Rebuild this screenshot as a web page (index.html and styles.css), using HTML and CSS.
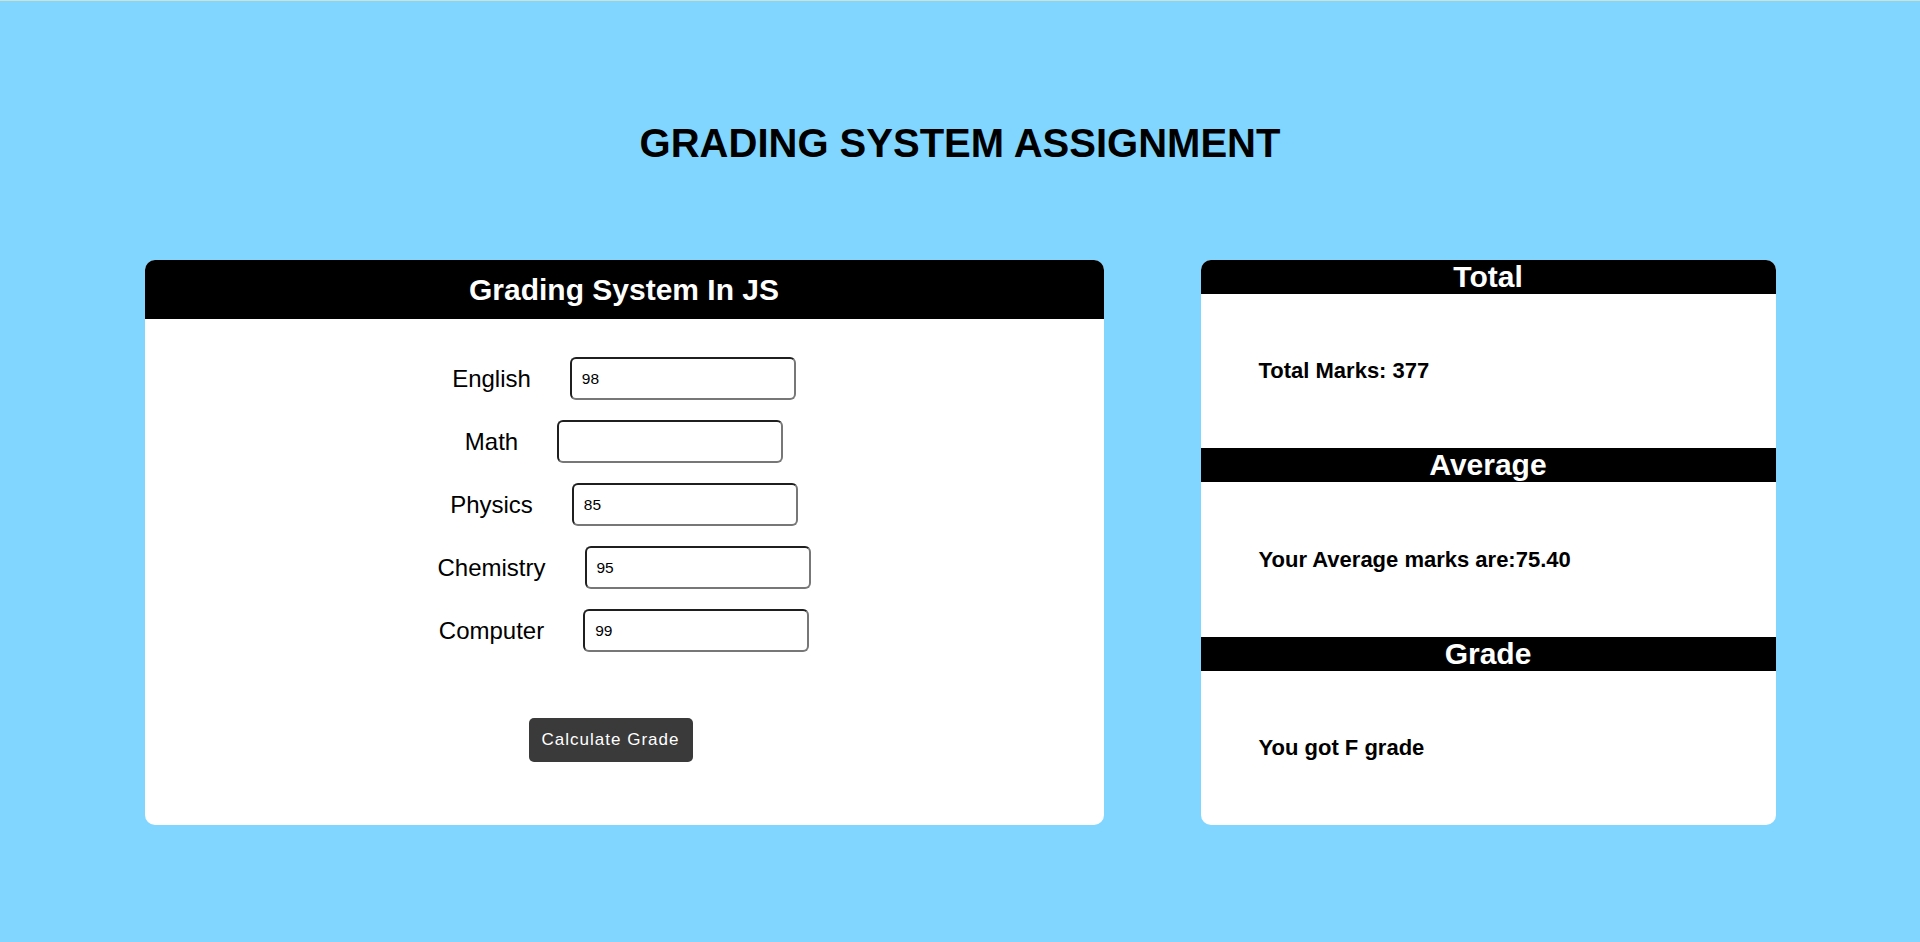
FILE: index.html
```html
<!DOCTYPE html>
<html lang="en">
<head>
<meta charset="utf-8">
<title>Grading System Assignment</title>
<link rel="stylesheet" href="styles.css">
</head>
<body>
<div class="page">
  <h1 class="title">GRADING SYSTEM ASSIGNMENT</h1>
  <div class="cards">
    <section class="card card-form">
      <h2 class="form-head">Grading System In JS</h2>
      <div class="form-body">
        <div class="rows">
          <div class="row"><label class="lbl">English</label><input class="field" type="text" value="98"></div>
          <div class="row"><label class="lbl">Math</label><input class="field" type="text" value=""></div>
          <div class="row"><label class="lbl">Physics</label><input class="field" type="text" value="85"></div>
          <div class="row"><label class="lbl">Chemistry</label><input class="field" type="text" value="95"></div>
          <div class="row"><label class="lbl">Computer</label><input class="field" type="text" value="99"></div>
        </div>
        <div class="actions"><button class="btn" type="button">Calculate Grade</button></div>
      </div>
    </section>
    <section class="card card-result">
      <h2 class="res-head">Total</h2>
      <div class="res-body"><p class="res-text">Total Marks: 377</p></div>
      <h2 class="res-head">Average</h2>
      <div class="res-body res-body-mid"><p class="res-text">Your Average marks are:75.40</p></div>
      <h2 class="res-head">Grade</h2>
      <div class="res-body"><p class="res-text">You got F grade</p></div>
    </section>
  </div>
</div>
</body>
</html>
```
FILE: styles.css
```css
html, body {
  margin: 0;
  padding: 0;
}
body {
  background: #80d6ff;
  border-top: 1px solid #cfe2d2;
  font-family: "Liberation Sans", Arial, sans-serif;
  color: #000;
  min-height: 941px;
}
.page {
  padding-top: 118px;
}
.title {
  margin: 0;
  font-size: 40px;
  line-height: 48px;
  font-weight: bold;
  text-align: center;
}
.cards {
  margin-top: 93px;
  display: flex;
  justify-content: center;
  gap: 97px;
}
.card {
  background: #fff;
  border-radius: 10px;
  overflow: hidden;
}
.card-form {
  width: 959px;
}
.card-result {
  width: 575px;
}
.form-head {
  margin: 0;
  height: 59px;
  line-height: 59px;
  background: #000;
  color: #fff;
  font-size: 30px;
  font-weight: bold;
  text-align: center;
}
.form-body {
  padding: 38px 0 63px;
}
.rows {
  display: flex;
  flex-direction: column;
  gap: 20px;
}
.row {
  display: flex;
  justify-content: center;
  align-items: center;
  gap: 39px;
  height: 43px;
}
.lbl {
  font-size: 24px;
}
.field {
  box-sizing: border-box;
  width: 226px;
  height: 43px;
  border-style: solid;
  border-width: 2px;
  border-color: #1f1f1f #777 #777 #1f1f1f;
  border-radius: 6px;
  padding: 0 10px;
  font-family: "Liberation Sans", Arial, sans-serif;
  font-size: 15.5px;
  color: #000;
  background: #fff;
  outline: none;
}
.actions {
  margin-top: 66px;
  display: flex;
  justify-content: center;
  padding-right: 27px;
}
.btn {
  box-sizing: border-box;
  width: 164px;
  height: 44px;
  border: none;
  border-radius: 5px;
  background: #3a3a3a;
  color: #fff;
  font-family: "Liberation Sans", Arial, sans-serif;
  font-size: 17px;
  letter-spacing: 1px;
  padding: 0;
}
.res-head {
  margin: 0;
  height: 34px;
  line-height: 34px;
  background: #000;
  color: #fff;
  font-size: 30px;
  font-weight: bold;
  text-align: center;
}
.res-body {
  height: 154px;
  display: flex;
  align-items: center;
  padding-left: 58px;
}
.res-body-mid {
  height: 155px;
}
.res-text {
  margin: 0;
  font-size: 22px;
  font-weight: bold;
}
```
